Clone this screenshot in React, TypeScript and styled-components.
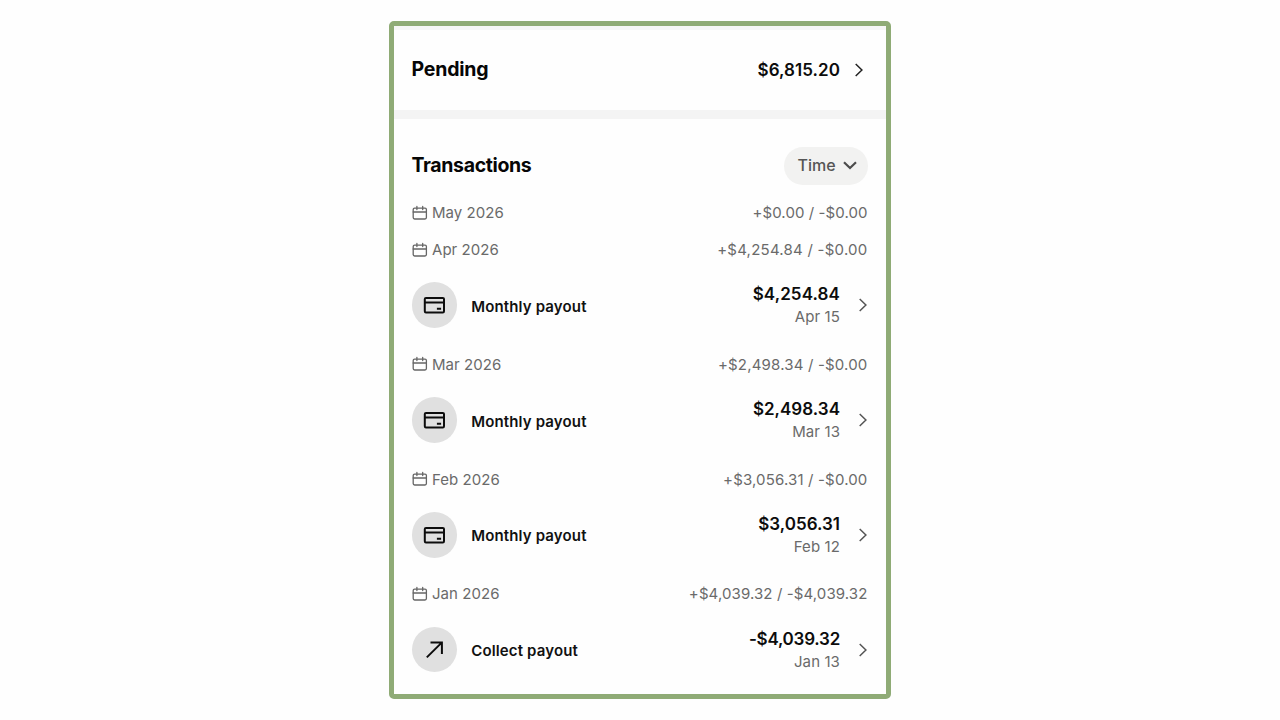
import React from 'react';
import styled, { createGlobalStyle } from 'styled-components';

interface Payout {
  kind: 'monthly' | 'collect';
  label: string;
  amount: string;
  date: string;
  tracking?: number;
}

interface Month {
  name: string;
  totals: string;
  tracking: number;
  payout?: Payout;
}

interface TextProps {
  $tracking?: number;
}

const months: Month[] = [
  { name: 'May 2026', totals: '+$0.00 / -$0.00', tracking: 0.08 },
  {
    name: 'Apr 2026',
    totals: '+$4,254.84 / -$0.00',
    tracking: 0.24,
    payout: { kind: 'monthly', label: 'Monthly payout', amount: '$4,254.84', date: 'Apr 15', tracking: 0.1 },
  },
  {
    name: 'Mar 2026',
    totals: '+$2,498.34 / -$0.00',
    tracking: 0.18,
    payout: { kind: 'monthly', label: 'Monthly payout', amount: '$2,498.34', date: 'Mar 13', tracking: 0.02 },
  },
  {
    name: 'Feb 2026',
    totals: '+$3,056.31 / -$0.00',
    tracking: 0.16,
    payout: { kind: 'monthly', label: 'Monthly payout', amount: '$3,056.31', date: 'Feb 12', tracking: 0 },
  },
  {
    name: 'Jan 2026',
    totals: '+$4,039.32 / -$4,039.32',
    tracking: 0.11,
    payout: { kind: 'collect', label: 'Collect payout', amount: '-$4,039.32', date: 'Jan 13', tracking: -0.24 },
  },
];

const CalendarIcon: React.FC = () => (
  <svg width="16" height="16" viewBox="0 0 16 16" fill="none" stroke="#666" strokeWidth="1.3" strokeLinecap="round">
    <rect x="1.2" y="3.2" width="13.2" height="10.8" rx="1.4" />
    <path d="M1.2 7H14.4M4.9 1.5V4.6M10.7 1.5V4.6" />
  </svg>
);

const CardIcon: React.FC = () => (
  <svg width="24" height="20" viewBox="0 0 24 20" fill="none" stroke="#0c0c0c" strokeWidth="2">
    <rect x="2.8" y="2.9" width="19.2" height="14.6" rx="1.2" />
    <path d="M2.8 7.4H22M14.9 13.8H19.1" />
  </svg>
);

const ArrowIcon: React.FC = () => (
  <svg width="24" height="24" viewBox="0 0 24 24" fill="none" stroke="#0c0c0c" strokeWidth="2">
    <path d="M4.8 19.4L19.7 4.6M8.5 4.4H19.9V15.9" />
  </svg>
);

const ChevronRight: React.FC<{ color: string }> = ({ color }) => (
  <svg width="10" height="16" viewBox="0 0 10 16" fill="none" stroke={color} strokeWidth="1.5">
    <path d="M1.7 2L7.9 8L1.7 14" />
  </svg>
);

const ChevronDown: React.FC = () => (
  <svg width="14" height="10" viewBox="0 0 14 10" fill="none" stroke="#4c4c4c" strokeWidth="2.2">
    <path d="M1 2.2L7 8L13 2.2" />
  </svg>
);

const App: React.FC = () => {
  return (
    <Page>
      <GlobalStyle />
      <Card>
        <TopStrip />
        <PendingRow>
          <Heading $tracking={-0.2}>Pending</Heading>
          <PendingValue>
            <Amount $tracking={0.05}>$6,815.20</Amount>
            <ChevronRight color="#222" />
          </PendingValue>
        </PendingRow>
        <Divider />
        <TransactionsHeader>
          <Heading $tracking={-0.36}>Transactions</Heading>
          <FilterButton>
            Time
            <ChevronDown />
          </FilterButton>
        </TransactionsHeader>
        {months.map((month) => (
          <React.Fragment key={month.name}>
            <MonthRow>
              <MonthName>
                <CalendarIcon />
                {month.name}
              </MonthName>
              <MonthTotals $tracking={month.tracking}>{month.totals}</MonthTotals>
            </MonthRow>
            {month.payout && (
              <PayoutRow>
                <IconCircle>{month.payout.kind === 'monthly' ? <CardIcon /> : <ArrowIcon />}</IconCircle>
                <PayoutLabel>{month.payout.label}</PayoutLabel>
                <PayoutValue>
                  <Amount $tracking={month.payout.tracking}>{month.payout.amount}</Amount>
                  <PayoutDate>{month.payout.date}</PayoutDate>
                </PayoutValue>
                <ChevronRight color="#555" />
              </PayoutRow>
            )}
          </React.Fragment>
        ))}
      </Card>
    </Page>
  );
};

export default App;

// Styled Components
const GlobalStyle = createGlobalStyle`
  body {
    margin: 0;
    background-color: #fefefe;
  }

  * {
    box-sizing: border-box;
  }

  svg {
    display: block;
    flex-shrink: 0;
  }
`;

const Page = styled.div`
  height: 720px;
  display: flex;
  justify-content: center;
  align-items: center;
  font-family: 'Inter', sans-serif;
  overflow: hidden;
`;

const Card = styled.div`
  width: 502px;
  height: 678px;
  border: 5px solid #8fab76;
  border-radius: 5px;
  background-color: #fefefe;
`;

const TopStrip = styled.div`
  height: 4px;
  background-color: #f6f6f6;
`;

const PendingRow = styled.div`
  display: flex;
  align-items: center;
  justify-content: space-between;
  height: 80px;
  padding: 0 22px 2px 17.5px;
`;

const PendingValue = styled.div`
  display: flex;
  align-items: center;
  gap: 14px;
  padding-top: 2px;
`;

const Divider = styled.div`
  height: 9px;
  background-color: #f4f4f4;
`;

const Heading = styled.h2<TextProps>`
  margin: 0;
  font-size: 19.5px;
  font-weight: 700;
  letter-spacing: ${props => props.$tracking ?? 0}px;
  color: #060606;
`;

const TransactionsHeader = styled.div`
  display: flex;
  align-items: flex-start;
  justify-content: space-between;
  height: 75px;
  padding: 28px 18px 0 17.5px;

  ${Heading} {
    line-height: 36px;
  }
`;

const FilterButton = styled.button`
  display: flex;
  align-items: center;
  justify-content: center;
  gap: 7px;
  width: 84px;
  height: 38.4px;
  padding: 0 0 2px 2px;
  border: none;
  border-radius: 20px;
  background-color: #f2f2f1;
  font-family: inherit;
  font-size: 16px;
  font-weight: 550;
  color: #555;
`;

const MonthRow = styled.div`
  display: flex;
  align-items: center;
  justify-content: space-between;
  height: 37px;
  padding: 0 18.5px 0 17.6px;
  font-size: 15px;
  color: #6a6a6a;
`;

const MonthName = styled.div`
  display: flex;
  align-items: center;
  gap: 4.4px;
  letter-spacing: 0.05px;
`;

const MonthTotals = styled.div<TextProps>`
  letter-spacing: ${props => props.$tracking}px;
`;

const PayoutRow = styled.div`
  display: flex;
  align-items: center;
  height: 77.8px;
  padding: 0 18px 3.4px 17.6px;
`;

const IconCircle = styled.div`
  display: flex;
  align-items: center;
  justify-content: center;
  width: 45.6px;
  height: 45.6px;
  border-radius: 50%;
  background-color: #e0e0e0;
`;

const PayoutLabel = styled.div`
  flex: 1;
  margin-left: 14px;
  padding-top: 2.4px;
  font-size: 15px;
  font-weight: 600;
  letter-spacing: 0.15px;
  color: #111;
`;

const PayoutValue = styled.div`
  display: flex;
  flex-direction: column;
  align-items: flex-end;
  margin-right: 18px;
  padding-top: 1px;
`;

const Amount = styled.div<TextProps>`
  font-size: 17px;
  font-weight: 600;
  line-height: 23px;
  letter-spacing: ${props => props.$tracking ?? 0}px;
  color: #0c0c0c;
`;

const PayoutDate = styled.div`
  font-size: 15px;
  line-height: 22px;
  letter-spacing: 0.1px;
  color: #6a6a6a;
`;
